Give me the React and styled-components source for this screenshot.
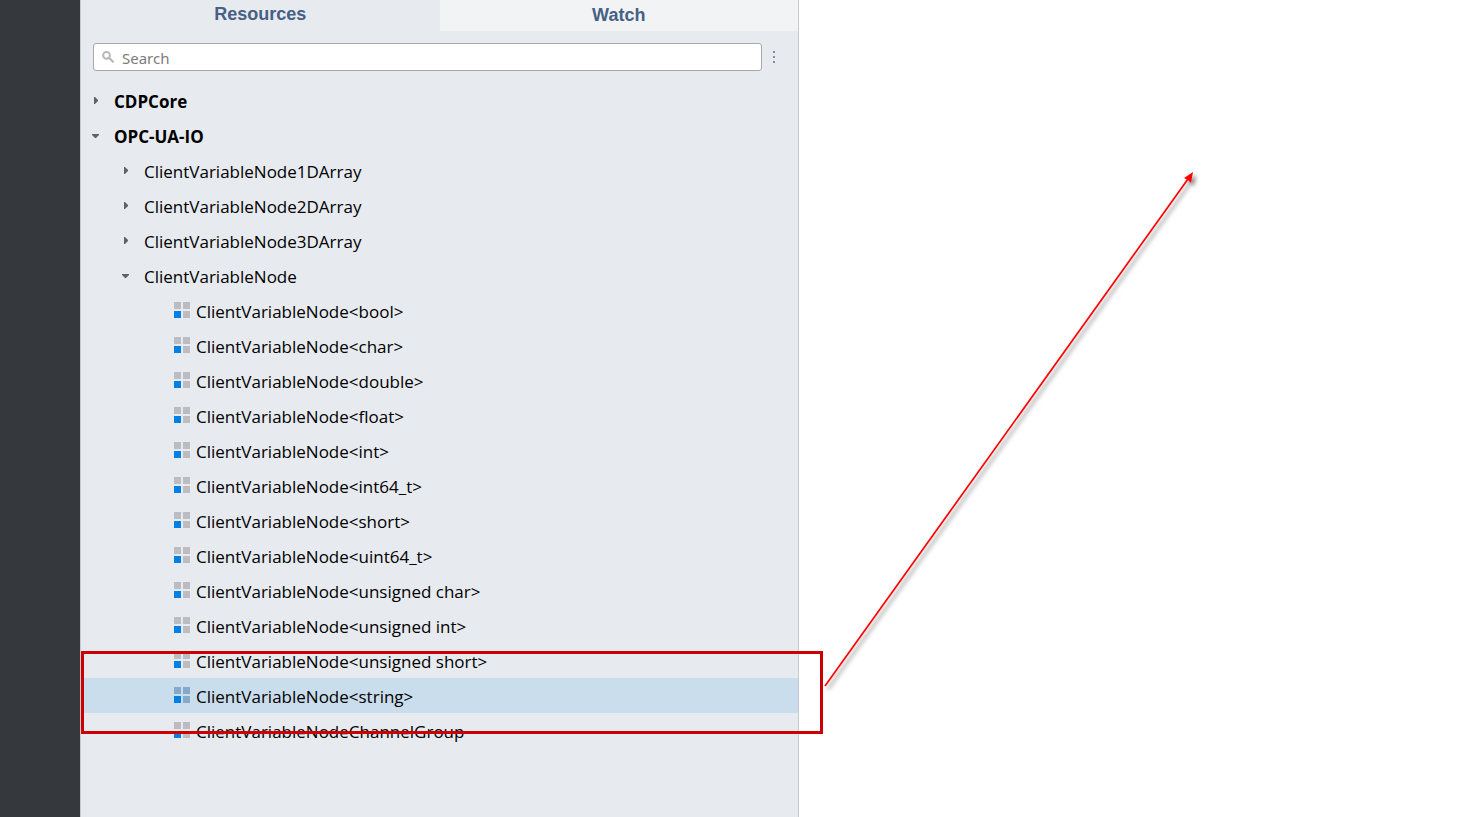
import React, { useState } from "react";
import styled, { createGlobalStyle } from "styled-components";

const GlobalStyle = createGlobalStyle`
  *, *::before, *::after { box-sizing: border-box; }
  body {
    margin: 0;
    background: #ffffff;
    color: #000000;
    font-family: "Segoe UI", "Open Sans", sans-serif;
    overflow-x: hidden;
  }
  button, input { font: inherit; color: inherit; }
`;

const Workspace = styled.div`
  display: grid;
  grid-template-columns: 80px minmax(0, 719fr) minmax(0, 672fr);
  min-height: 100vh;
`;

const SideBar = styled.div`
  background: #35393d;
`;

const Panel = styled.aside`
  background: #e7eaef;
  border: solid #c8cacd;
  border-width: 0 1px;
`;

const TabBar = styled.div`
  display: flex;
  height: 31px;
`;

const Tab = styled.button`
  flex: 1;
  padding: ${(p) => (p["aria-selected"] ? "0 0 4px" : "0 0 2px")};
  border: 0;
  background: ${(p) => (p["aria-selected"] ? "transparent" : "#f1f3f5")};
  color: #466085;
  font-family: "Liberation Sans", Arial, sans-serif;
  font-size: 18px;
  font-weight: 700;
  line-height: 24px;
`;

const SearchBar = styled.form`
  display: flex;
  align-items: center;
  gap: 5px;
  padding: 12px 17px 12px 12px;
`;

const SearchField = styled.label`
  flex: 1;
  display: flex;
  align-items: center;
  gap: 6px;
  height: 28px;
  padding: 0 8px;
  background: #ffffff;
  border: 1px solid #a9a9a9;
  border-radius: 3px;
`;

const SearchInput = styled.input`
  flex: 1;
  min-width: 0;
  padding: 2px 0 0;
  border: 0;
  outline: 0;
  background: transparent;
  font-family: "Noto Sans", sans-serif;
  font-size: 15px;
  line-height: 24px;
  &::placeholder { color: #7c7c7c; opacity: 1; }
`;

const MenuButton = styled.button`
  display: flex;
  align-items: center;
  justify-content: center;
  width: 14px;
  height: 28px;
  padding: 0;
  border: 0;
  background: transparent;
`;

const Tree = styled.ul`
  margin: 0;
  padding: 0;
  list-style: none;
`;

const Row = styled.div`
  position: relative;
  display: flex;
  align-items: center;
  height: 35px;
  padding-left: ${(p) => 10 + p.$level * 30}px;
  background: ${(p) => (p.$selected ? "#cadded" : "transparent")};
`;

const Toggle = styled.button`
  display: flex;
  align-items: center;
  gap: 13px;
  padding: 0;
  border: 0;
  background: transparent;
`;

const LeafContent = styled.span`
  display: flex;
  align-items: center;
  gap: 6px;
  padding-left: 23px;
`;

const Label = styled.span`
  padding-top: 2px;
  font-size: 17px;
  font-weight: ${(p) => (p.$bold ? 700 : 400)};
  line-height: 24px;
  white-space: nowrap;
`;

const Highlight = styled.div`
  position: absolute;
  z-index: 1;
  top: -27px;
  right: -25px;
  bottom: -21px;
  left: 0;
  border: 3px solid #cc0000;
  pointer-events: none;
`;

const Canvas = styled.main`
  position: relative;
  background: #ffffff;
`;

const Arrow = styled.svg`
  position: absolute;
  top: 160px;
  left: 16px;
`;

function Caret({ open }) {
  return (
    <svg width="10" height="10" viewBox="0 0 10 10" fill="#626262" aria-hidden="true">
      {open ? <path d="M1 3h7v1L5 7H4L1 4z" /> : <path d="M3 1h1l3 3v1L4 8H3z" />}
    </svg>
  );
}

function NodeIcon({ selected }) {
  const tile = selected ? "#84a9c9" : "#bbbdc0";
  return (
    <svg width="16" height="18" viewBox="0 0 16 18" aria-hidden="true">
      <path fill={tile} d="M0 0h7v7H0zM9 0h7v7H9zM9 9h7v7H9z" />
      <path fill="#0080e3" d="M0 9h7v7H0z" />
    </svg>
  );
}

function SearchIcon() {
  return (
    <svg width="14" height="14" viewBox="0 0 14 14" fill="none" stroke="#b8b8b8" aria-hidden="true">
      <circle cx="4.5" cy="5.3" r="3.4" strokeWidth="2" />
      <path d="M7.2 8l4.3 4.3" strokeWidth="2.2" />
    </svg>
  );
}

const variants = [
  "bool", "char", "double", "float", "int", "int64_t", "short",
  "uint64_t", "unsigned char", "unsigned int", "unsigned short", "string",
];

const resources = [
  { name: "CDPCore", children: [] },
  {
    name: "OPC-UA-IO",
    children: [
      { name: "ClientVariableNode1DArray", children: [] },
      { name: "ClientVariableNode2DArray", children: [] },
      { name: "ClientVariableNode3DArray", children: [] },
      {
        name: "ClientVariableNode",
        children: [
          ...variants.map((type) => ({
            name: `ClientVariableNode<${type}>`,
            selected: type === "string",
          })),
          { name: "ClientVariableNodeChannelGroup" },
        ],
      },
    ],
  },
];

function TreeNode({ node, level }) {
  const branch = Boolean(node.children);
  const [open, setOpen] = useState(branch && node.children.length > 0);
  return (
    <li>
      <Row $level={level} $selected={node.selected}>
        {branch ? (
          <Toggle type="button" aria-expanded={open} onClick={() => setOpen(!open)}>
            <Caret open={open} />
            <Label $bold={level === 0}>{node.name}</Label>
          </Toggle>
        ) : (
          <LeafContent>
            <NodeIcon selected={node.selected} />
            <Label>{node.name}</Label>
          </LeafContent>
        )}
        {node.selected && <Highlight />}
      </Row>
      {open && (
        <Tree>
          {node.children.map((child) => (
            <TreeNode key={child.name} node={child} level={level + 1} />
          ))}
        </Tree>
      )}
    </li>
  );
}

export default function App() {
  const [tab, setTab] = useState("Resources");
  return (
    <>
      <GlobalStyle />
      <Workspace>
        <SideBar />
        <Panel>
          <TabBar role="tablist">
            {["Resources", "Watch"].map((name) => (
              <Tab key={name} type="button" role="tab" aria-selected={tab === name} onClick={() => setTab(name)}>
                {name}
              </Tab>
            ))}
          </TabBar>
          <SearchBar role="search">
            <SearchField>
              <SearchIcon />
              <SearchInput type="text" placeholder="Search" aria-label="Search" />
            </SearchField>
            <MenuButton type="button" aria-label="More options">
              <svg width="2" height="12" viewBox="0 0 2 12" fill="#858d9f" aria-hidden="true">
                <path d="M0 0h2v2H0zM0 5h2v2H0zM0 10h2v2H0z" />
              </svg>
            </MenuButton>
          </SearchBar>
          <Tree>
            {resources.map((node) => (
              <TreeNode key={node.name} node={node} level={0} />
            ))}
          </Tree>
        </Panel>
        <Canvas>
          <Arrow width="400" height="550" viewBox="0 0 400 550" aria-hidden="true">
            <defs>
              <filter id="shadow" x="-10%" y="-10%" width="120%" height="120%">
                <feDropShadow dx="3" dy="3" stdDeviation="2" floodColor="#000000" floodOpacity="0.5" />
              </filter>
            </defs>
            <g filter="url(#shadow)">
              <path d="M10 526L373 19" stroke="#ff0000" strokeWidth="1.7" fill="none" />
              <path d="M378 12L376 23L373 20L369 18Z" fill="#ff0000" />
            </g>
          </Arrow>
        </Canvas>
      </Workspace>
    </>
  );
}
